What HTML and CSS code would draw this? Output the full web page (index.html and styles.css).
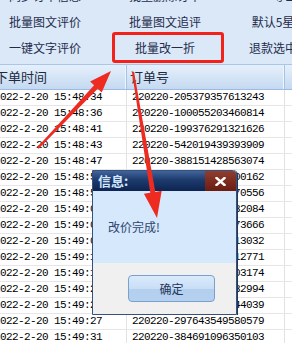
FILE: index.html
```html
<!DOCTYPE html>
<html lang="zh-CN">
<head>
    <meta charset="UTF-8">
    <meta name="viewport" content="width=device-width, initial-scale=1.0">
    <title>批量改一折</title>
    <link rel="stylesheet" href="styles.css">
</head>
<body>
    <div class="page">
        <div class="toolbar">
            <span>同步订单信息</span>
            <span>批量删除订单</span>
            <span>导出</span>
            <span>批量图文评价</span>
            <span>批量图文追评</span>
            <span>默认5星好评</span>
            <span>一键文字评价</span>
            <span>批量改一折</span>
            <span>退款选中订单</span>
        </div>
        <div class="grid">
            <div class="row head"><span class="c1">下单时间</span><span class="c2">订单号</span><span></span></div>
            <div class="row"><span class="c1">2022-2-20 15:48:34</span><span class="c2">220220-205379357613243</span><span></span></div>
            <div class="row"><span class="c1">2022-2-20 15:48:36</span><span class="c2">220220-100055203460814</span><span></span></div>
            <div class="row"><span class="c1">2022-2-20 15:48:41</span><span class="c2">220220-199376291321626</span><span></span></div>
            <div class="row"><span class="c1">2022-2-20 15:48:43</span><span class="c2">220220-542019439393909</span><span></span></div>
            <div class="row"><span class="c1">2022-2-20 15:48:47</span><span class="c2">220220-388151428563074</span><span></span></div>
            <div class="row"><span class="c1">2022-2-20 15:48:52</span><span class="c2">220220-376521804300162</span><span></span></div>
            <div class="row"><span class="c1">2022-2-20 15:48:58</span><span class="c2">220220-201846239570556</span><span></span></div>
            <div class="row"><span class="c1">2022-2-20 15:49:03</span><span class="c2">220220-519372648832084</span><span></span></div>
            <div class="row"><span class="c1">2022-2-20 15:49:05</span><span class="c2">220220-284015937773666</span><span></span></div>
            <div class="row"><span class="c1">2022-2-20 15:49:09</span><span class="c2">220220-103758426613032</span><span></span></div>
            <div class="row"><span class="c1">2022-2-20 15:49:12</span><span class="c2">220220-462809153312771</span><span></span></div>
            <div class="row"><span class="c1">2022-2-20 15:49:16</span><span class="c2">220220-350927184603174</span><span></span></div>
            <div class="row"><span class="c1">2022-2-20 15:49:20</span><span class="c2">220220-197364028832994</span><span></span></div>
            <div class="row"><span class="c1">2022-2-20 15:49:24</span><span class="c2">220220-528174906344039</span><span></span></div>
            <div class="row"><span class="c1">2022-2-20 15:49:27</span><span class="c2">220220-297643549580579</span><span></span></div>
            <div class="row"><span class="c1">2022-2-20 15:49:31</span><span class="c2">220220-384691096350103</span><span></span></div>
        </div>

        <!-- 红框标注 -->
        <div class="mark"></div>

        <!-- 信息弹窗 -->
        <div class="dialog">
            <div class="dialog-title">
                <b>信息:</b>
                <span class="dialog-close">
                    <svg width="11" height="9" viewBox="0 0 11 9">
                        <path d="M1.5 1 L9.5 8 M9.5 1 L1.5 8" stroke="#fff" stroke-width="2.4" stroke-linecap="square"/>
                    </svg>
                </span>
            </div>
            <div class="dialog-body">改价完成!</div>
            <div class="dialog-foot">
                <button class="btn">确定</button>
            </div>
        </div>

        <svg class="arrows" width="292" height="343" viewBox="0 0 292 343">
            <polygon points="37.3,147.3 94.1,85.3 90.1,81.5 111,71 101.7,92.5 97.7,88.7 38.7,148.7" fill="#ee2b21"/>
            <polygon points="132,72.2 150.3,192.7 143.9,193.8 157,218 161.7,190.8 155.3,191.9 134,71.8" fill="#ee2b21"/>
        </svg>
    </div>
</body>
</html>
```

FILE: styles.css
```css
body {
    margin: 0;
    background: #fff;
    font-family: "Noto Sans CJK SC", sans-serif;
}
.page {
    position: relative;
    display: flow-root;
    width: 292px;
    height: 343px;
    overflow: hidden;
}

/* 顶部按钮区 */
.toolbar {
    display: grid;
    grid-template-columns: repeat(3, 120px);
    grid-auto-rows: 26px;
    width: 360px;
    margin: -18px 0 0 -15px;
    padding-bottom: 4px;
    background: #dae8f8;
    border-bottom: 1px solid #a8c6ea;
    font-size: 12px;
    color: #1f2c4c;
}
.toolbar span {
    display: flex;
    align-items: center;
    justify-content: center;
    white-space: nowrap;
}

/* 订单列表 */
.grid {
    width: 400px;
    margin-left: -10px;
    font-family: "Liberation Mono", monospace;
    font-size: 11px;
    letter-spacing: -0.6px;
    color: #000;
}
.row {
    display: grid;
    grid-template-columns: 137px 158px 1fr;
    height: 16px;
    box-sizing: border-box;
    border-bottom: 1px solid #e6e6e6;
}
.row span {
    border-right: 1px solid #e2e2e2;
    line-height: 15px;
    white-space: nowrap;
    overflow: hidden;
}
.row .c1 {
    padding-left: 4px;
}
.row .c2 {
    padding-left: 5px;
}
.head {
    height: 25px;
    background: linear-gradient(#e6f0fb, #c4d9f1);
    border-bottom: 1px solid #9dbbe0;
    font-family: "Noto Sans CJK SC", sans-serif;
    font-size: 13px;
    letter-spacing: 0;
    color: #1e2a40;
}
.head span {
    line-height: 24px;
    border-right: 1px solid #a7c2e3;
    box-shadow: inset -1px 0 0 #eef5fd;
}
.head .c1 {
    padding-left: 5px;
}
.head .c2 {
    padding-left: 3px;
}

.mark {
    position: absolute;
    left: 112px;
    top: 32px;
    width: 112px;
    height: 31px;
    box-sizing: border-box;
    border: 3px solid #f2221a;
    border-radius: 3px;
}

/* 弹窗 */
.dialog {
    position: absolute;
    left: 92px;
    top: 170px;
    width: 145px;
    height: 145px;
    box-sizing: border-box;
    display: flex;
    flex-direction: column;
    border: 1px solid #35527f;
    border-radius: 0 5px 0 0;
    box-shadow: 1px 0 0 #26374f;
    overflow: hidden;
}
.dialog-title {
    display: flex;
    justify-content: space-between;
    height: 20px;
    background: linear-gradient(#41649b, #1d3b6d 45%, #0d2453);
}
.dialog-title b {
    padding-left: 5px;
    line-height: 20px;
    font-size: 13px;
    color: #d4e6ff;
}
.dialog-close {
    display: flex;
    align-items: center;
    justify-content: center;
    width: 31px;
    background: linear-gradient(#8f3d2e, #6a1d12);
}
.dialog-body {
    height: 72px;
    box-sizing: border-box;
    padding: 28px 0 0 15px;
    background: #d6e8fb;
    font-size: 12px;
    line-height: 16px;
    color: #2d4670;
}
.dialog-foot {
    flex: 1;
    display: flex;
    align-items: center;
    padding-left: 35px;
    background: #f0f0f0;
}
.btn {
    width: 87px;
    height: 27px;
    padding: 0;
    border: 1px solid #7aa0cf;
    border-radius: 4px;
    background: linear-gradient(#d9eafb 0, #c9def6 50%, #b3cfee 50%, #b6d1ef 100%);
    font-family: "Noto Sans CJK SC", sans-serif;
    font-size: 12px;
    color: #23365a;
}

.arrows {
    position: absolute;
    left: 0;
    top: 0;
    pointer-events: none;
}
```
